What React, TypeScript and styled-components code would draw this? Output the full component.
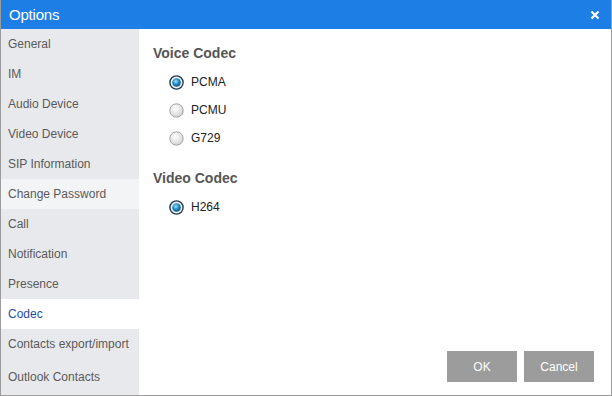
import styled, { createGlobalStyle } from "styled-components";

const GlobalStyle = createGlobalStyle`
  html, body {
    margin: 0;
    padding: 0;
    background: #ffffff;
  }
  body {
    font-family: Arial, "Liberation Sans", sans-serif;
  }
`;

const Window = styled.div`
  width: 612px;
  height: 396px;
  box-sizing: border-box;
  border: 1px solid #9c9c9c;
  border-top: none;
  display: flex;
  flex-direction: column;
  background: #ffffff;
  overflow: hidden;
`;

const TitleBar = styled.div`
  height: 29px;
  flex: 0 0 auto;
  margin: 0 -1px;
  background: #1d7fe6;
  display: flex;
  align-items: center;
  justify-content: space-between;
  padding: 0 10px 0 9px;
  color: #ffffff;
`;

const Title = styled.span`
  font-size: 15px;
  letter-spacing: -0.2px;
`;

const CloseButton = styled.span`
  width: 10px;
  height: 10px;
  display: flex;
  margin-right: 2px;
`;

const Body = styled.div`
  flex: 1;
  display: flex;
  min-height: 0;
`;

const Sidebar = styled.div`
  width: 138px;
  flex: 0 0 auto;
  background: #e8e9ec;
  display: flex;
  flex-direction: column;
`;

const NavItem = styled.div<{ $active?: boolean; $hover?: boolean; $tall?: boolean }>`
  height: ${(p) => (p.$tall ? 36 : 30)}px;
  display: flex;
  align-items: center;
  padding-left: 7px;
  font-size: 12px;
  color: ${(p) => (p.$active ? "#1e4fa0" : "#5a5a5a")};
  background: ${(p) => (p.$active ? "#ffffff" : p.$hover ? "#f3f4f6" : "transparent")};
`;

const Content = styled.div`
  flex: 1;
  display: flex;
  flex-direction: column;
  padding: 16px 0 0 14px;
  position: relative;
`;

const SectionTitle = styled.div`
  font-size: 14px;
  font-weight: bold;
  color: #555555;
  height: 19px;
  margin-bottom: 4px;
`;

const RadioRow = styled.label`
  display: flex;
  align-items: center;
  gap: 7px;
  height: 28px;
  padding-left: 16px;
  font-size: 12px;
  color: #222222;
`;

const Section = styled.div`
  display: flex;
  flex-direction: column;
  margin-bottom: 18px;
`;

const Footer = styled.div`
  position: absolute;
  right: 17px;
  bottom: 13px;
  display: flex;
  gap: 7px;
`;

const Button = styled.button`
  width: 70px;
  height: 31px;
  border: none;
  background: #9c9c9c;
  color: #ffffff;
  font-family: Arial, "Liberation Sans", sans-serif;
  font-size: 12px;
  padding: 0;
`;

function Radio({ checked }: { checked?: boolean }) {
  return (
    <svg width="15" height="15" viewBox="0 0 15 15">
      <defs>
        <radialGradient id="radio-off" cx="0.4" cy="0.35" r="0.7">
          <stop offset="0" stopColor="#ffffff" />
          <stop offset="1" stopColor="#d2d2d2" />
        </radialGradient>
        <radialGradient id="radio-dot" cx="0.42" cy="0.38" r="0.65">
          <stop offset="0" stopColor="#a8e4ff" />
          <stop offset="0.45" stopColor="#2a9ad8" />
          <stop offset="1" stopColor="#0a4570" />
        </radialGradient>
      </defs>
      {checked ? (
        <>
          <circle cx="7.5" cy="7.5" r="6.6" fill="#eef2f5" stroke="#1f3a52" strokeWidth="1.4" />
          <circle cx="7.5" cy="7.5" r="4.3" fill="url(#radio-dot)" />
        </>
      ) : (
        <circle cx="7.5" cy="7.5" r="6.7" fill="url(#radio-off)" stroke="#a4a4a4" strokeWidth="1" />
      )}
    </svg>
  );
}

const navItems = [
  "General",
  "IM",
  "Audio Device",
  "Video Device",
  "SIP Information",
  "Change Password",
  "Call",
  "Notification",
  "Presence",
  "Codec",
  "Contacts export/import",
  "Outlook Contacts",
];

export default function App() {
  return (
    <>
      <GlobalStyle />
      <Window>
        <TitleBar>
          <Title>Options</Title>
          <CloseButton>
            <svg width="10" height="10" viewBox="0 0 10 10">
              <path d="M1.5 1.5 L8.5 8.5 M8.5 1.5 L1.5 8.5" stroke="#ffffff" strokeWidth="2.2" />
            </svg>
          </CloseButton>
        </TitleBar>
        <Body>
          <Sidebar>
            {navItems.map((name) => (
              <NavItem
                key={name}
                $active={name === "Codec"}
                $hover={name === "Change Password"}
                $tall={name === "Outlook Contacts"}
              >
                {name}
              </NavItem>
            ))}
          </Sidebar>
          <Content>
            <Section>
              <SectionTitle>Voice Codec</SectionTitle>
              <RadioRow>
                <Radio checked />
                PCMA
              </RadioRow>
              <RadioRow>
                <Radio />
                PCMU
              </RadioRow>
              <RadioRow>
                <Radio />
                G729
              </RadioRow>
            </Section>
            <Section>
              <SectionTitle>Video Codec</SectionTitle>
              <RadioRow>
                <Radio checked />
                H264
              </RadioRow>
            </Section>
            <Footer>
              <Button>OK</Button>
              <Button>Cancel</Button>
            </Footer>
          </Content>
        </Body>
      </Window>
    </>
  );
}
